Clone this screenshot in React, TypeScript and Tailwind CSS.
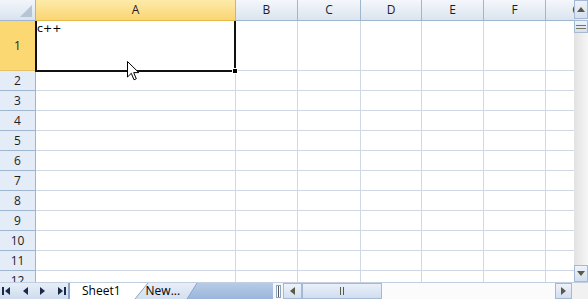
import React from "react";

// 列定義（幅はスクリーンショットから計測）
const columns = [
  { name: "A", w: "w-[200px]" },
  { name: "B", w: "w-[62px]" },
  { name: "C", w: "w-[63px]" },
  { name: "D", w: "w-[61px]" },
  { name: "E", w: "w-[62px]" },
  { name: "F", w: "w-[62px]" },
  { name: "G", w: "w-[62px]" },
];

const rows = [1, 2, 3, 4, 5, 6, 7, 8, 9, 10, 11, 12];

function Tri({ dir }: { dir: "up" | "down" | "left" | "right" }) {
  const pts = {
    up: "0,5 4,0 8,5",
    down: "0,0 8,0 4,5",
    left: "5,0 5,8 0,4",
    right: "0,0 0,8 5,4",
  }[dir];
  const size = dir === "up" || dir === "down" ? { w: 8, h: 5 } : { w: 5, h: 8 };
  return (
    <svg width={size.w} height={size.h} viewBox={`0 0 ${size.w} ${size.h}`}>
      <polygon points={pts} fill="#5b5a45" />
    </svg>
  );
}

function ScrollBtn({ dir, cls }: { dir: "up" | "down" | "left" | "right"; cls: string }) {
  return (
    <div
      className={`${cls} shrink-0 flex items-center justify-center border border-[#a5b9d3] bg-linear-to-b from-[#eef3fa] to-[#d3dff0]`}
    >
      <Tri dir={dir} />
    </div>
  );
}

export default function App() {
  return (
    <div
      className="w-[588px] h-[299px] flex flex-col bg-white overflow-hidden select-none"
      style={{ fontFamily: '"Open Sans", "Liberation Sans", sans-serif' }}
    >
      {/* 上部：グリッド＋縦スクロール */}
      <div className="flex h-[282px]">
        <div className="relative w-[574px] h-full overflow-hidden">
          {/* 列ヘッダー */}
          <div className="flex h-[21px]">
            <div className="relative w-[36px] shrink-0 border-r border-b border-[#9eb6ce] bg-linear-to-b from-[#f2f6fb] to-[#d9e3ef]">
              <svg className="absolute right-[3px] bottom-[3px]" width="12" height="12" viewBox="0 0 12 12">
                <polygon points="12,0 12,12 0,12" fill="#b6c4d6" />
              </svg>
            </div>
            {columns.map((c) => (
              <div
                key={c.name}
                className={`${c.w} shrink-0 flex items-center justify-center text-[12px] text-[#1e1e1e] border-r border-b ${
                  c.name === "A"
                    ? "bg-linear-to-b from-[#fdeaa9] to-[#fad572] border-r-[#c3b58a] border-b-[#e6b94c]"
                    : "bg-linear-to-b from-[#f4f7fb] to-[#dbe4ef] border-[#9eb6ce]"
                }`}
              >
                {c.name}
              </div>
            ))}
          </div>

          {/* 行 */}
          {rows.map((r) => (
            <div key={r} className={`flex ${r === 1 ? "h-[50px]" : "h-[20px]"}`}>
              <div
                className={`w-[36px] shrink-0 flex items-center justify-center text-[12px] text-[#1e1e1e] border-r border-b ${
                  r === 1
                    ? "bg-[#fcd872] border-b-[#e6c068] border-r-[#1a1a1a]"
                    : "bg-[#e4ecf7] border-[#9eb6ce]"
                }`}
              >
                {r}
              </div>
              {columns.map((c) => (
                <div key={c.name} className={`${c.w} shrink-0 border-r border-b border-[#d0d7e5]`}>
                  {r === 1 && c.name === "A" && (
                    <div
                      className="pl-[1px] pt-[1px] text-[11px] leading-[14px] text-black"
                      style={{ fontFamily: '"DejaVu Sans", sans-serif' }}
                    >
                      c++
                    </div>
                  )}
                </div>
              ))}
            </div>
          ))}

          {/* 選択枠 */}
          <div className="absolute left-[35px] top-[21px] w-[201px] h-[51px] border-l-2 border-r-2 border-b-2 border-[#111]" />
          <div className="absolute left-[232px] top-[68px] w-[6px] h-[6px] bg-black border border-white" />

          {/* マウスカーソル */}
          <svg className="absolute left-[127px] top-[61px]" width="13" height="21" viewBox="0 0 13 21">
            <path
              d="M0.5 0.5 L0.5 16 L4.3 12.3 L7 18.8 L9.3 17.8 L6.7 11.6 L11.8 11.6 Z"
              fill="#fff"
              stroke="#000"
              strokeWidth="1"
              strokeLinejoin="round"
            />
          </svg>
        </div>

        {/* 縦スクロールバー */}
        <div className="w-[14px] h-full flex flex-col bg-linear-to-r from-[#e2e2e2] to-[#f6f6f6]">
          <ScrollBtn dir="up" cls="h-[19px]" />
          <div className="h-[13px] mt-[1px] flex flex-col items-center justify-center gap-[2px] border border-[#a5b9d3] bg-linear-to-b from-[#eef3fa] to-[#d3dff0]">
            <div className="w-[10px] h-px bg-[#77755a]" />
            <div className="w-[10px] h-px bg-[#77755a]" />
          </div>
          <div className="flex-1" />
          <ScrollBtn dir="down" cls="h-[17px]" />
        </div>
      </div>

      {/* 下部：シートタブ＋横スクロール */}
      <div className="flex h-[17px] border-t border-[#c2cfe0] bg-[#f6f6f6]">
        {/* ナビボタン */}
        <div className="w-[70px] shrink-0 flex items-center justify-between px-[2px] border-r-2 border-[#8aa4c8] bg-linear-to-b from-[#e6eef8] to-[#cfdcee]">
          <div className="flex items-center gap-[1px]">
            <div className="w-[2px] h-[8px] bg-[#1b2a48]" />
            <svg width="5" height="8" viewBox="0 0 5 8"><polygon points="5,0 5,8 0,4" fill="#1b2a48" /></svg>
          </div>
          <svg width="5" height="8" viewBox="0 0 5 8"><polygon points="5,0 5,8 0,4" fill="#1b2a48" /></svg>
          <svg width="5" height="8" viewBox="0 0 5 8"><polygon points="0,0 0,8 5,4" fill="#1b2a48" /></svg>
          <div className="flex items-center gap-[1px]">
            <svg width="5" height="8" viewBox="0 0 5 8"><polygon points="0,0 0,8 5,4" fill="#1b2a48" /></svg>
            <div className="w-[2px] h-[8px] bg-[#1b2a48]" />
          </div>
        </div>

        {/* シートタブ */}
        <div className="relative w-[203px] shrink-0 flex items-center text-[12px] text-black">
          <svg className="absolute inset-0" width="203" height="16" viewBox="0 0 203 16" preserveAspectRatio="none">
            <defs>
              <linearGradient id="strip" x1="0" y1="0" x2="0" y2="1">
                <stop offset="0" stopColor="#b7cbe7" />
                <stop offset="1" stopColor="#9bb5da" />
              </linearGradient>
              <linearGradient id="newtab" x1="0" y1="0" x2="0" y2="1">
                <stop offset="0" stopColor="#e8eef8" />
                <stop offset="1" stopColor="#d3dff0" />
              </linearGradient>
            </defs>
            <rect x="0" y="0" width="203" height="16" fill="url(#strip)" />
            <polygon points="65,16 78,0 127,0 117,16" fill="url(#newtab)" />
            <polygon points="0,0 78,0 65,16 0,16" fill="#fff" />
            <line x1="78" y1="0" x2="65" y2="16" stroke="#8ea5c5" strokeWidth="1" />
            <line x1="127" y1="0" x2="117" y2="16" stroke="#8ea5c5" strokeWidth="1" />
          </svg>
          <span className="relative ml-[12px]">Sheet1</span>
          <span className="relative ml-[25px]">New...</span>
        </div>

        {/* 分割バー */}
        <div className="w-[10px] shrink-0 flex items-center justify-center">
          <div className="w-[5px] h-[13px] border border-[#8ea5c5] bg-white flex justify-center">
            <div className="w-px h-full bg-[#555]" />
          </div>
        </div>

        {/* 横スクロールバー */}
        <ScrollBtn dir="left" cls="w-[19px]" />
        <div className="w-[80px] shrink-0 flex items-center justify-center gap-[2px] border border-[#a5b9d3] bg-linear-to-b from-[#e9f0f9] to-[#d0def0]">
          <div className="w-px h-[8px] bg-[#5b5a45]" />
          <div className="w-px h-[8px] bg-[#5b5a45]" />
        </div>
        <div className="flex-1 bg-[#fbfbfb]" />
        <ScrollBtn dir="right" cls="w-[17px]" />
        <div className="w-[16px] shrink-0 bg-[#f1f1f1]" />
      </div>
    </div>
  );
}
